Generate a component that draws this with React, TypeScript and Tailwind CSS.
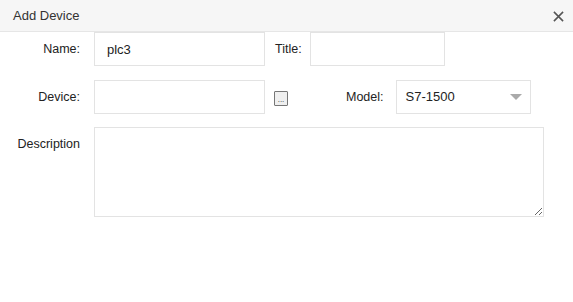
import React from "react";

export default function App() {
  const font = { fontFamily: '"Liberation Sans", Arial, sans-serif' };
  return (
    <div className="w-[573px] h-[302px] bg-white text-[#333]" style={font}>
      <div className="h-[32px] bg-[#f6f6f6] border-b border-[#e6e6e6] flex items-center justify-between pl-[13px] pr-[9px]">
        <span className="text-[13px] text-[#333]">Add Device</span>
        <svg width="11" height="11" viewBox="0 0 12 12" className="mt-[1px]">
          <path d="M1 1 L11 11 M11 1 L1 11" stroke="#555" strokeWidth="1.7" fill="none" />
        </svg>
      </div>
      <div className="flex flex-col">
        <div className="flex items-center h-[34px]">
          <span className="w-[80px] text-right text-[12.5px] text-[#222]">Name:</span>
          <input
            defaultValue="plc3"
            className="ml-[14px] w-[171px] h-[34px] border border-[#e3e3e3] px-[12px] text-[13px] text-[#222] outline-none"
            style={font}
          />
          <span className="ml-[10px] text-[12.5px] text-[#222]">Title:</span>
          <input
            className="ml-[8px] w-[135px] h-[34px] border border-[#e3e3e3] px-[12px] text-[13px] outline-none"
            style={font}
          />
        </div>
        <div className="flex items-center h-[34px] mt-[14px]">
          <span className="w-[80px] text-right text-[12.5px] text-[#222]">Device:</span>
          <input
            className="ml-[14px] w-[171px] h-[34px] border border-[#e3e3e3] px-[12px] text-[13px] outline-none"
            style={font}
          />
          <div className="ml-[9px] mt-[3px] w-[14px] h-[15px] bg-[#efefef] border border-[#767676] rounded-[1px] flex items-end justify-center pb-[2px]">
            <span className="text-[8px] leading-[6px] text-[#333]">...</span>
          </div>
          <span className="ml-[58px] text-[12.5px] text-[#222]">Model:</span>
          <div className="ml-[12px] w-[135px] h-[34px] border border-[#e3e3e3] flex items-center justify-between pl-[9px] pr-[8px]">
            <span className="text-[13px] text-[#222]">S7-1500</span>
            <svg width="12" height="6" viewBox="0 0 12 6">
              <path d="M0 0 L12 0 L6 6 Z" fill="#aaa" />
            </svg>
          </div>
        </div>
        <div className="flex items-start mt-[13px]">
          <span className="w-[80px] text-right text-[12.5px] text-[#222] mt-[8px]">Description</span>
          <textarea
            className="ml-[14px] w-[450px] h-[90px] border border-[#e3e3e3] outline-none resize-y"
            style={font}
          />
        </div>
      </div>
    </div>
  );
}
